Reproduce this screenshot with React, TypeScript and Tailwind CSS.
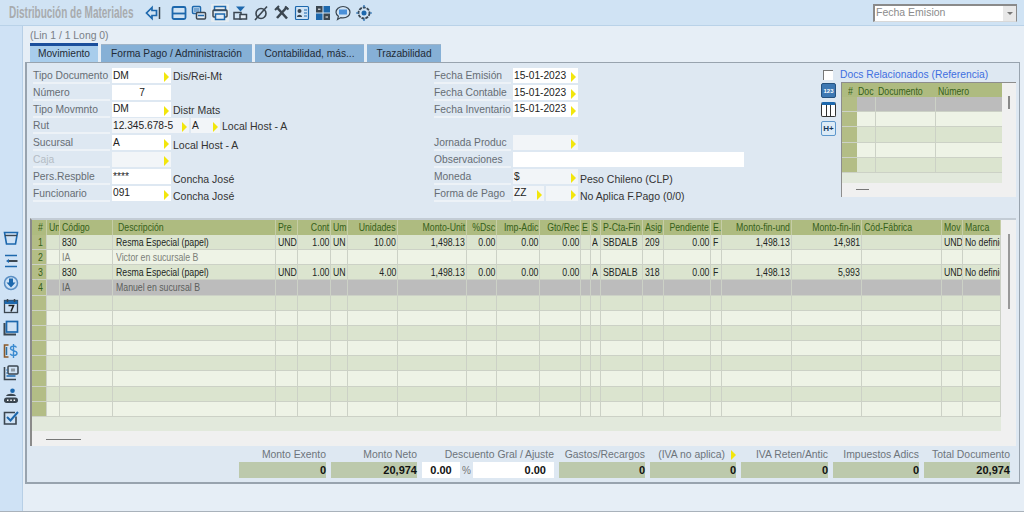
import type { ReactNode } from "react";

const Arrow = () => (
  <span className="ml-auto mr-[2px] mt-[3px] h-0 w-0 shrink-0 border-y-[5px] border-l-[5px] border-y-transparent border-l-[#f2e60c]" />
);

const Field = ({ value, w, arrow = true, white = true, center = false }: { value?: string; w: string; arrow?: boolean; white?: boolean; center?: boolean }) => (
  <div className={`flex h-[15px] items-center pl-[1px] text-[10.2px] text-[#222] ${w} ${white ? "bg-white" : "bg-[#f2f5f8]"} ${center ? "justify-center" : ""}`}>
    <span className="whitespace-nowrap">{value}</span>
    {arrow && <Arrow />}
  </div>
);

const Label = ({ children, disabled = false }: { children?: ReactNode; disabled?: boolean }) => (
  <div className={`h-[16px] w-[77px] shrink-0 whitespace-nowrap border-b-2 border-[#edf2f7] pt-[1px] text-[10.3px] leading-[13px] ${disabled ? "text-[#b5bcc4]" : "text-[#666d74]"}`}>{children}</div>
);

const Row = ({ children }: { children?: ReactNode }) => <div className="flex h-[16.8px] items-start gap-[2px]">{children}</div>;

const Desc = ({ children, low = false }: { children: ReactNode; low?: boolean }) => (
  <span className={`whitespace-nowrap text-[10.5px] leading-[13px] text-[#333] ${low ? "mt-[4px]" : "mt-[2px]"}`}>{children}</span>
);

const Narrow = ({ children, right = false }: { children: ReactNode; right?: boolean }) => (
  <span className={`inline-block shrink-0 ${right ? "origin-right" : "origin-left"} scale-x-[0.76]`}>{children}</span>
);

const Ico = ({ children, className = "" }: { children: ReactNode; className?: string }) => (
  <svg viewBox="0 0 16 16" className={`h-[16px] w-[16px] shrink-0 ${className}`} fill="none" strokeWidth="1.5">
    {children}
  </svg>
);

const blue = "#1d68ad";
const dark = "#3b4650";

const toolbar = [
  <><path d="M7 2.5 1.5 8 7 13.5V10.5h4.5v-5H7z" stroke={blue} strokeWidth="1.7" /><path d="M14.5 2v12" stroke={dark} strokeWidth="1.5" /></>,
  <><rect x="1.5" y="2" width="13" height="12" rx="1.5" stroke={blue} strokeWidth="1.8" /><path d="M2 8.500h12" stroke={blue} strokeWidth="1.8" /></>,
  <><rect x="1.5" y="1.5" width="8" height="7" rx="1" stroke={blue} /><path d="M3 4h5M3 6h5" stroke={blue} strokeWidth="1" /><rect x="5.5" y="7.5" width="9" height="6.5" rx="1" fill="#e3edf6" stroke={dark} /><path d="M7 10.500h6" stroke={blue} /></>,
  <><rect x="2.5" y="1.5" width="11" height="4" stroke={blue} /><rect x="1" y="5" width="14" height="7" rx="1" stroke={dark} /><rect x="3.5" y="9" width="9" height="5.5" fill="#e3edf6" stroke={blue} /></>,
  <><path d="M4 1.500h9L8.500 6.500z" fill={blue} /><path d="M2 7.500h7v6.500H2z" stroke={dark} /><path d="M8 9.500h6.500V14H8z" fill="#e3edf6" stroke={dark} /></>,
  <><circle cx="8" cy="8.500" r="5" stroke={dark} strokeWidth="1.6" /><path d="M14 1.500 2 15" stroke={dark} strokeWidth="1.6" /></>,
  <><path d="M3 2.500 13 13.500" stroke={dark} strokeWidth="2.6" /><path d="M13 2 3 13" stroke={dark} strokeWidth="2.6" /><path d="M1 5 5 1M11 1.500l3.500 3" stroke={dark} strokeWidth="2" /></>,
  <><rect x="1.500" y="1.500" width="13" height="13" rx="1" stroke={blue} strokeWidth="1.2" /><circle cx="5.500" cy="6" r="2" fill={dark} /><path d="M3 12c0-3 5-3 5 0z" fill={dark} /><path d="M10 5h3M10 8h3M10 11h3" stroke={blue} strokeWidth="1.2" /></>,
  <><rect x="1" y="1" width="6.500" height="6.500" fill={dark} /><rect x="8.500" y="1" width="6.500" height="6.500" fill={blue} /><rect x="1" y="8.500" width="6.500" height="6.500" fill={blue} /><rect x="8.500" y="8.500" width="6.500" height="6.500" fill={dark} /><path d="M3 4.200h2.500M10.500 12h2.500" stroke="#fff" strokeWidth="1" /></>,
  <><path d="M8 1.500c4 0 7 2.600 7 5.700s-3 5.700-7 5.700c-.8 0-1.500-.1-2.200-.3L2.500 14.500l.9-3.200C2 10.200 1 8.800 1 7.200 1 4.100 4 1.500 8 1.500z" stroke={dark} strokeWidth="1.2" /><rect x="4" y="4.500" width="8" height="5" fill="#4a90d9" /></>,
  <><circle cx="8" cy="8" r="5.500" stroke={dark} strokeWidth="1.800" strokeDasharray="3 1" /><circle cx="8" cy="8" r="2.500" fill={blue} /><path d="M8 0v2.500M8 13.500V16M0 8h2.500M13.500 8H16" stroke={blue} strokeWidth="1.200" /></>,
];

const sideIcons = [
  <><path d="M1.500 2.500h13L12.500 14h-9z" stroke={blue} strokeWidth="1.600" /><path d="M2 5.500h12" stroke={dark} strokeWidth="1.400" /></>,
  <><path d="M2 2.500h12M2 13.500h12" stroke={blue} strokeWidth="1.700" /><path d="M6 6 3 8l3 2z" fill={blue} /><path d="M6 8h8.500" stroke={dark} strokeWidth="2" /></>,
  <><circle cx="8" cy="8" r="6.500" stroke="#5a8fc4" strokeWidth="1.500" /><path d="M6 3.500h4v4h2.500L8 12.500 3.500 7.500H6z" fill={blue} /></>,
  <><rect x="1.500" y="2.500" width="13" height="12" stroke={dark} strokeWidth="1.300" /><rect x="1.500" y="2.500" width="13" height="3.500" fill={blue} /><path d="M4.500 1v3M11.500 1v3" stroke={dark} /><path d="M5.500 7.500h5L8 13.500" stroke="#222" strokeWidth="1.600" /></>,
  <><path d="M1.500 3v11.500H13" stroke={dark} strokeWidth="2" /><rect x="3.500" y="1.500" width="11" height="10.500" stroke={blue} strokeWidth="1.700" /></>,
  <><path d="M5.500 2H1.500v12h4" stroke="#8a5a2a" strokeWidth="1.600" /><path d="M3.500 4v8" stroke="#2f6f9f" /><path d="M13.500 4.500c-1-2-6-2-6 .7 0 3 6.500 2 6.500 5 0 2.800-5.500 2.800-6.800.6M10.500 1v14" stroke="#3a8ad0" strokeWidth="1.400" /></>,
  <><path d="M1.500 2v12.500H13" stroke={dark} strokeWidth="1.600" /><rect x="5" y="1" width="10" height="8" rx="1" stroke={dark} strokeWidth="1.500" /><rect x="8" y="3.500" width="4" height="3" fill="#8e98a2" /><path d="M3.500 5h1M3.500 8h1M3.500 11h9" stroke={blue} strokeWidth="1.500" /></>,
  <><circle cx="9.500" cy="2.800" r="2.300" fill={blue} /><path d="M3 8c1-3 9-3 10 0z" fill={dark} /><rect x="1" y="9.500" width="14" height="5.500" rx="2.700" fill={dark} /><path d="M4 12.200h1.500M7.300 12.200h1.500M10.600 12.200h1.500" stroke="#fff" strokeWidth="1.500" /></>,
  <><path d="M13 6.500v7.500H1.500V2.500H12" stroke={dark} strokeWidth="1.600" /><path d="m4 7 3.500 3.500L15 2" stroke={blue} strokeWidth="2" /></>,
];

const columns = "grid-cols-[15px_13px_53px_163px_22px_33px_17px_50px_69px_30px_43px_41px_10px_10px_42px_21px_47px_11px_70px_70px_80px_21px_38px]";

const headers: [string, boolean][] = [
  ["#", false], ["Un", false], ["Código", false], ["Descripción", false], ["Pre", false], ["Cont", true], ["Um", false], ["Unidades", true],
  ["Monto-Unit", true], ["%Dsc", true], ["Imp-Adic", true], ["Gto/Rec", true], ["E", false], ["S", false], ["P-Cta-Fin", false], ["Asig", false],
  ["Pendiente", true], ["E.", false], ["Monto-fin-und", true], ["Monto-fin-lin", true], ["Cód-Fábrica", false], ["Mov", false], ["Marca", false],
];

const resma = (n: string, u: string, asig: string, lin: string) => [
  n, "", "830", "Resma Especial (papel)", "UND", "1.00", "UN", u, "1,498.13", "0.00", "0.00", "0.00", "", "A", "SBDALB", asig, "0.00", "F", "1,498.13", lin, "", "UND", "No definido",
];

const blankRow = (n: string, code = "", desc = "") => [n, "", code, desc, ...Array(19).fill("")];

const rows: string[][] = [
  resma("1", "10.00", "209", "14,981"),
  blankRow("2", "IA", "Victor en sucursale B"),
  resma("3", "4.00", "318", "5,993"),
  blankRow("4", "IA", "Manuel en sucursal B"),
  ...Array.from({ length: 8 }, () => blankRow("")),
];

const totals = [
  { label: "Monto Exento", value: "0", w: "w-[87px]" },
  { label: "Monto Neto", value: "20,974", w: "w-[86px]" },
];

const totals2 = [
  { label: "Gastos/Recargos", value: "0", w: "w-[86px]" },
  { label: "(IVA no aplica)", value: "0", w: "w-[86px]", arrow: true },
  { label: "IVA Reten/Antic", value: "0", w: "w-[87px]" },
  { label: "Impuestos Adics", value: "0", w: "w-[86px]" },
  { label: "Total Documento", value: "20,974", w: "w-[86px]" },
];

const Total = ({ label, value, w, arrow }: { label: string; value: string; w: string; arrow?: boolean }) => (
  <div className={`flex flex-col ${w}`}>
    <div className="flex h-[15px] items-center justify-end whitespace-nowrap text-[10.4px] text-[#6d747b]">
      {label}
      {arrow && <span className="ml-[6px] h-0 w-0 border-y-[5px] border-l-[5px] border-y-transparent border-l-[#f2e60c]" />}
    </div>
    <div className="flex h-[16px] items-center justify-end bg-[#bcc9ac] text-[11px] font-bold text-[#111]">{value}</div>
  </div>
);

const App = () => {
  return (
    <div className="flex h-[512px] w-[1024px] flex-col overflow-hidden border-b border-[#a9b2bb] bg-[#e6eef6] font-['Liberation_Sans',sans-serif]">
      <header className="flex h-[26px] shrink-0 items-center border-b border-[#b9d2e8] bg-[#d0e3f4] pl-[9px]">
        <div className="w-[136px] shrink-0 origin-left scale-x-[0.625] whitespace-nowrap text-[16px] font-bold text-[#a8abae]">Distribución de Materiales</div>
        <div className="flex items-center gap-[4.600px]">
          {toolbar.map((icon, i) => (
            <span key={i} className={i === 3 ? "-m-[1px] rounded-[1px] bg-[#e4ecf2] p-[1px]" : i === 0 ? "mr-[5px]" : ""}>
              <Ico>{icon}</Ico>
            </span>
          ))}
        </div>
        <div className="ml-auto mr-[7px] flex h-[18px] w-[144px] items-center border-b border-l-2 border-r border-t-2 border-b-[#d8d8d8] border-l-[#8a8a8a] border-r-[#8a8a8a] border-t-[#8a8a8a] bg-white pl-[1px] text-[10.5px] text-[#8c8c8c]">
          Fecha Emision
          <span className="ml-auto flex h-full w-[13px] items-center justify-center bg-[#e8e8e8]">
            <span className="h-0 w-0 border-x-[3px] border-t-[3px] border-x-transparent border-t-[#777]" />
          </span>
        </div>
      </header>

      <div className="flex min-h-0 flex-1">
        <aside className="flex w-[23px] shrink-0 flex-col items-center gap-[6.500px] border-r border-[#b7cfe6] bg-[#cfe2f5] pt-[204px]">
          {sideIcons.map((icon, i) => (
            <Ico key={i}>{icon}</Ico>
          ))}
        </aside>

        <main className="flex min-w-0 flex-1 flex-col pl-[2px] pr-[4px]">
          <div className="h-[17px] pl-[5px] pt-[4px] text-[10.4px] leading-[12px] text-[#7a8087]">(Lin 1 / 1 Long 0)</div>
          <nav className="flex h-[19px] shrink-0 items-end gap-[3px] pl-[5px] text-[10.2px] text-[#1f2b36]">
            <div className="flex h-[19px] w-[68px] items-center justify-center border-t-[3px] border-[#1b4f9c] bg-[#a8cdec]">Movimiento</div>
            <div className="flex h-[18px] w-[151px] items-center justify-center border-t border-[#9fb4c8] bg-[#86b0d6]">Forma Pago / Administración</div>
            <div className="flex h-[18px] w-[109px] items-center justify-center border-t border-[#9fb4c8] bg-[#86b0d6]">Contabilidad, más...</div>
            <div className="flex h-[18px] w-[74px] items-center justify-center border-t border-[#9fb4c8] bg-[#86b0d6]">Trazabilidad</div>
          </nav>

          <section className="flex h-[422px] flex-col border-b-2 border-l-2 border-r border-t border-[#98a3ae] bg-[#dee8f2]">
            <div className="flex h-[155px] shrink-0 pl-[6px] pt-[5px]">
              <div className="flex w-[401px] flex-col">
                <Row><Label>Tipo Documento</Label><Field value="DM" w="w-[59px]" /><Desc>Dis/Rei-Mt</Desc></Row>
                <Row><Label>Número</Label><Field value="7" w="w-[59px]" arrow={false} center /></Row>
                <Row><Label>Tipo Movmnto</Label><Field value="DM" w="w-[59px]" /><Desc>Distr Mats</Desc></Row>
                <Row>
                  <Label>Rut</Label>
                  <Field value="12.345.678-5" w="w-[77px]" white={false} />
                  <Field value="A" w="w-[29px]" white={false} />
                  <Desc>Local Host - A</Desc>
                </Row>
                <Row><Label>Sucursal</Label><Field value="A" w="w-[59px]" /><Desc low>Local Host - A</Desc></Row>
                <Row><Label disabled>Caja</Label><Field w="w-[59px]" white={false} /></Row>
                <Row><Label>Pers.Respble</Label><Field value="****" w="w-[59px]" arrow={false} /><Desc low>Concha José</Desc></Row>
                <Row><Label>Funcionario</Label><Field value="091" w="w-[59px]" /><Desc low>Concha José</Desc></Row>
              </div>

              <div className="flex w-[385px] flex-col">
                <Row><Label>Fecha Emisión</Label><Field value="15-01-2023" w="w-[65px]" /></Row>
                <Row><Label>Fecha Contable</Label><Field value="15-01-2023" w="w-[65px]" /></Row>
                <Row><Label>Fecha Inventario</Label><Field value="15-01-2023" w="w-[65px]" /></Row>
                <Row />
                <Row><Label>Jornada Produc</Label><Field w="w-[65px]" white={false} /></Row>
                <Row><Label>Observaciones</Label><Field w="w-[231px]" arrow={false} /></Row>
                <Row><Label>Moneda</Label><Field value="$" w="w-[65px]" white={false} /><Desc low>Peso Chileno (CLP)</Desc></Row>
                <Row>
                  <Label>Forma de Pago</Label>
                  <Field value="ZZ" w="w-[31px]" white={false} />
                  <Field w="w-[32px]" white={false} />
                  <Desc low>No Aplica F.Pago (0/0)</Desc>
                </Row>
              </div>

              <div className="flex flex-col">
                <div className="flex h-[14px] items-center gap-[7px] pl-[4px] text-[10.3px] text-[#3f6fe0]">
                  <span className="h-[10px] w-[10px] border-l border-t border-[#777] bg-white" />
                  Docs Relacionados (Referencia)
                </div>
                <div className="flex gap-[5px]">
                  <div className="flex flex-col gap-[4px] pl-[2px] pt-[1px]">
                    <span className="flex h-[15px] w-[15px] items-center justify-center rounded-[2px] border border-[#25527f] bg-[#3d78b3] text-[6px] font-bold leading-none text-white">123</span>
                    <span className="flex h-[15px] w-[15px] items-stretch justify-evenly rounded-[2px] border border-t-[3px] border-[#333] border-t-[#1d68ad] bg-white">
                      <span className="w-[1px] bg-[#333]" /><span className="w-[1px] bg-[#333]" />
                    </span>
                    <span className="flex h-[15px] w-[15px] items-center justify-center rounded-[2px] border border-[#5d97cc] bg-[#dcebf7] text-[8px] font-bold leading-none text-[#14365c]">H+</span>
                  </div>
                  <div className="flex h-[115px] w-[175px] flex-col border-l border-t border-[#8d8d8d] bg-[#f0f0f0]">
                    <div className="flex">
                      <div className="w-[160px]">
                        <div className="grid h-[14px] grid-cols-[15px_19px_60px_66px] items-center bg-[#aebb80] text-[11.5px] text-[#356019]">
                          <span className="pl-[6px]"><Narrow>#</Narrow></span>
                          <span className="pl-[1px]"><Narrow>Doc</Narrow></span>
                          <span className="pl-[2px]"><Narrow>Documento</Narrow></span>
                          <span className="pl-[2px]"><Narrow>Número</Narrow></span>
                        </div>
                        {["bg-[#bcbcbc]", "bg-[#eef3e6]", "bg-[#dbe4cf]", "bg-[#eef3e6]", "bg-[#dbe4cf]"].map((bg, i) => (
                          <div key={i} className={`grid h-[15.200px] grid-cols-[15px_19px_60px_66px] border-b border-[#ccd1c6] ${bg}`}>
                            <span className="bg-[#b3bd86]" />
                            <span className="border-r border-[#ccd1c6]" />
                            <span className="border-r border-[#ccd1c6]" />
                            <span />
                          </div>
                        ))}
                        <div className="h-[10px] bg-[#e2e9dc]" />
                      </div>
                      <div className="flex w-[15px] justify-center pt-[13px]">
                        <span className="h-[13px] w-[2px] bg-[#888]" />
                      </div>
                    </div>
                    <div className="ml-[14px] mt-[6px] h-[1px] w-[13px] bg-[#777]" />
                  </div>
                </div>
              </div>
            </div>

            <div className="mx-[3px] h-[228px] shrink-0 border-l-2 border-t-2 border-l-[#8a8a8a] border-t-[#c3ccd5] bg-[#f0f0f0]">
              <div className="flex">
                <div className="w-[969px] shrink-0">
                  <div className={`grid h-[15px] items-center bg-[#aebb80] text-[11.5px] leading-[15px] text-[#356019] ${columns}`}>
                    {headers.map(([h, right], c) => (
                      <div
                        key={h}
                        className={`flex h-full overflow-hidden whitespace-nowrap border-r border-[#c5cda6] ${right ? "justify-end pr-[1px]" : "justify-start"} ${c === 0 ? "pl-[6px]" : c === 3 ? "pl-[5px]" : c > 11 && c < 14 ? "pl-[1px]" : "pl-[2px]"}`}
                      >
                        <Narrow right={right}>{h}</Narrow>
                      </div>
                    ))}
                  </div>
                  {rows.map((row, r) => {
                    const bg = r === 3 ? "bg-[#bcbcbc]" : r % 2 === 0 ? "bg-[#dbe4cf]" : "bg-[#eef3e6]";
                    const muted = r === 1 ? "text-[#7b7f78]" : r === 3 ? "text-[#5c5f5c]" : "text-[#222522]";
                    return (
                      <div key={r} className={`grid h-[15.170px] border-b border-[#ccd1c6] text-[11.5px] leading-[14px] ${bg} ${muted} ${columns}`}>
                        {row.map((cell, c) => (
                          <div
                            key={c}
                            className={`flex overflow-hidden whitespace-nowrap border-r border-[#ccd1c6] ${c === 0 ? "bg-[#b3bd86] pl-[6px] text-[#356019]" : c === 3 ? "pl-[3px]" : c > 11 && c < 14 ? "pl-[1px]" : "pl-[2px]"} ${headers[c][1] ? "justify-end pr-[1px]" : "justify-start"}`}
                          >
                            {cell && <Narrow right={headers[c][1]}>{cell}</Narrow>}
                          </div>
                        ))}
                      </div>
                    );
                  })}
                  <div className="h-[14px] bg-[#e2e9dc]" />
                </div>
                <div className="flex w-[15px] justify-center pt-[14px]">
                  <span className="h-[75px] w-[2px] bg-[#999]" />
                </div>
              </div>
              <div className="ml-[14px] mt-[8px] h-[1px] w-[35px] bg-[#777]" />
            </div>

            <div className="flex gap-[5px] pl-[212px] pt-[1px]">
              {totals.map((t) => <Total key={t.label} {...t} />)}
              <div className="flex w-[132px] flex-col">
                <div className="flex h-[15px] items-center justify-end whitespace-nowrap text-[10.4px] text-[#6d747b]">Descuento Gral / Ajuste</div>
                <div className="flex h-[16px] items-center text-[11px] font-bold text-[#111]">
                  <span className="flex h-full w-[38px] items-center justify-center bg-white">0.00</span>
                  <span className="flex h-full w-[13px] items-end justify-center text-[10px] font-normal text-[#777]">%</span>
                  <span className="flex h-full w-[81px] items-center justify-end bg-white pr-[8px]">0.00</span>
                </div>
              </div>
              {totals2.map((t) => <Total key={t.label} {...t} />)}
            </div>
          </section>
        </main>
      </div>
    </div>
  );
};

export default App;
